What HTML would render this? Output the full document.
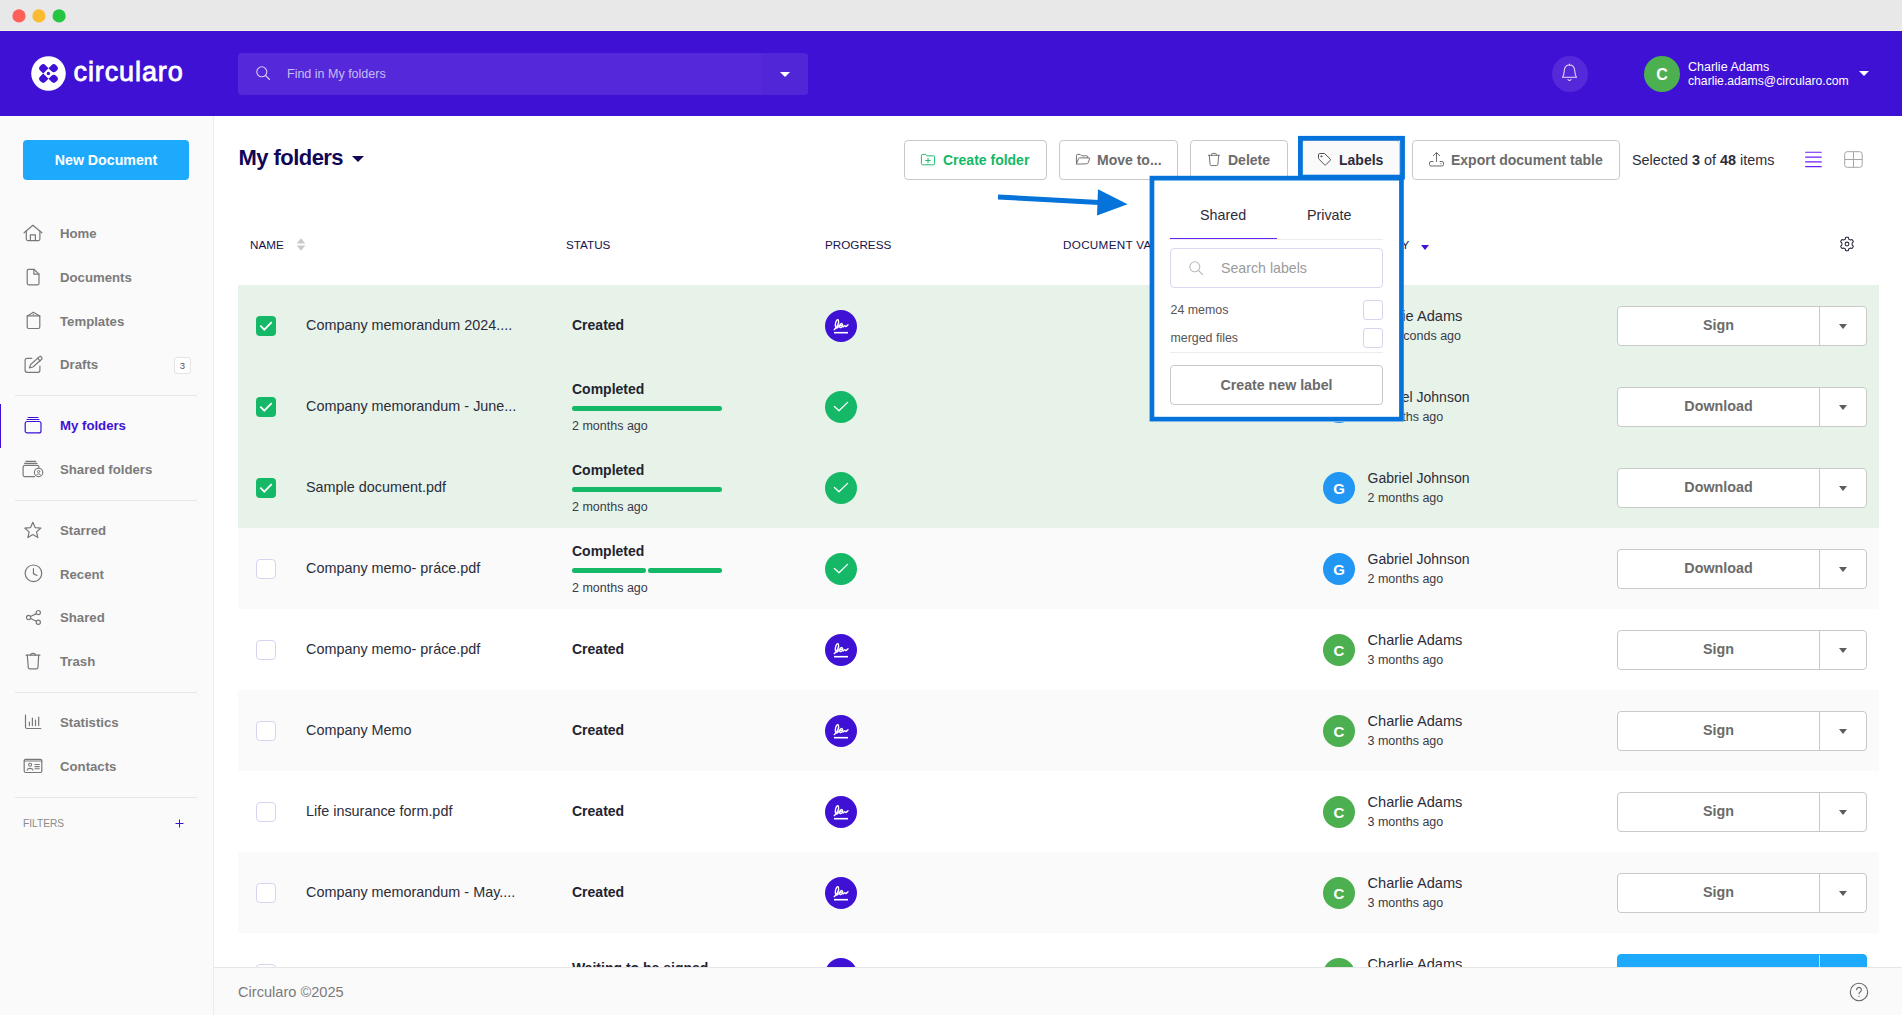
<!DOCTYPE html>
<html>
<head>
<meta charset="utf-8">
<title>Circularo</title>
<style>
*{box-sizing:border-box;margin:0;padding:0}
html,body{width:1902px;height:1015px;overflow:hidden;background:#fff}
body{font-family:"Liberation Sans",sans-serif;color:#2a2a3c;position:relative;font-size:14px}
.abs{position:absolute}
svg{display:block}
/* title bar */
#titlebar{position:absolute;left:0;top:0;width:1902px;height:31px;background:#e8e8e8;border-bottom:1px solid #f3f1ea}
.tl{position:absolute;top:9.400px;width:13px;height:13px;border-radius:50%}
/* header */
#header{position:absolute;left:0;top:31px;width:1902px;height:85px;background:#3f11d5}
#logo-c{position:absolute;left:31.300px;top:25.300px;width:35px;height:35px}
#logo-t{position:absolute;left:73.500px;top:23px;font-size:27px;line-height:36px;color:#fff;-webkit-text-stroke:0.800px #fff;letter-spacing:0.900px}
#search{position:absolute;left:238px;top:22px;width:570px;height:42px;border-radius:4px;background:#5529d9}
#search .dd{position:absolute;right:0;top:0;width:46px;height:42px;background:#5126d6;border-radius:0 4px 4px 0}
#search .ph{position:absolute;left:49px;top:0;line-height:42px;font-size:12.5px;color:#c9bdf4}
#bell{position:absolute;left:1552px;top:25px;width:36px;height:36px;border-radius:50%;background:#5529d9}
#avatar{position:absolute;left:1644px;top:25px;width:36px;height:36px;border-radius:50%;background:#4caf50;color:#fff;font-weight:bold;font-size:16px;line-height:37.500px;text-align:center}
#uname{position:absolute;left:1688px;top:29px;font-size:12.5px;line-height:14px;color:#fff}
/* sidebar */
#sidebar{position:absolute;left:0;top:116px;width:214px;height:899px;background:#fafafa;border-right:1px solid #ececec}
#newdoc{position:absolute;left:23px;top:24px;width:166px;height:40px;border-radius:4px;background:#1eaafc;color:#fff;font-weight:bold;font-size:14.200px;line-height:40px;text-align:center}
.nav{position:absolute;left:60px;font-size:13.200px;font-weight:bold;color:#7b7b7b;line-height:16px}
.nav.act{color:#3f11d5}
.ico{position:absolute;left:22px;width:22px;height:22px}
.sep{position:absolute;left:15px;width:182px;height:1px;background:#e6e6e6}
.badge{position:absolute;left:174px;top:241px;width:17px;height:17px;border:1px solid #e4e4e4;border-radius:3px;background:#fff;font-size:9.5px;line-height:15px;text-align:center;color:#555}
.actbar{position:absolute;left:0;top:288px;width:1px;height:44px;background:#3f11d5}
.filters{position:absolute;left:23px;top:702px;font-size:10.200px;line-height:12px;color:#8a8a8a}
/* main */
#main{position:absolute;left:214px;top:116px;width:1688px;height:899px;background:#fff;overflow:hidden}
/* all children of #main positioned in page coords via offset wrapper */
#m{position:absolute;left:-214px;top:-116px;width:1902px;height:1015px}
#title{position:absolute;left:238.500px;top:143.600px;font-size:22px;font-weight:bold;line-height:28px;color:#120656;letter-spacing:-0.550px}
.tbtn{position:absolute;top:140px;height:40px;border:1px solid #c9c9c9;border-radius:4px;background:#fff;font-size:14px;font-weight:bold;color:#6b6b6b;line-height:38px;white-space:nowrap}
.tbtn span{position:absolute;top:0}
.th{position:absolute;top:237.600px;font-size:11.700px;line-height:14px;color:#17124a;white-space:nowrap}
.row{position:absolute;left:238px;width:1641px;height:81px}
.row.sel{background:#e7f3e9}
.row.odd{background:#fafafa}
.cb{position:absolute;left:18px;top:31px;width:20px;height:20px;border-radius:4px;border:1px solid #d9d3f0;background:#fff}
.cb.on{border:none;background:#14b866}
.nm{position:absolute;left:68px;top:31px;font-size:14.400px;line-height:18px;color:#2c2c3a;white-space:nowrap}
.st{position:absolute;left:334px;font-size:14px;font-weight:bold;line-height:18px;color:#23232f;white-space:nowrap}
.st.one{top:31px}
.st.two{top:14px}
.bar{position:absolute;left:334px;top:40.300px;width:150px;height:4.600px;border-radius:2.300px;background:#14b866}
.ago{position:absolute;left:334px;top:53px;font-size:12.500px;line-height:14px;color:#3a3a48;white-space:nowrap}
.pi{position:absolute;left:587px;top:25px;width:32px;height:32px;border-radius:50%}
.pi.sig{background:#3f11d5}
.pi.ok{background:#14b866}
.av{position:absolute;left:1085px;top:25px;width:32px;height:32px;border-radius:50%;color:#fff;font-weight:bold;font-size:15px;line-height:33px;text-align:center}
.av.g{background:#2196f3}
.av.c{background:#4caf50}
.un{position:absolute;left:1129.500px;top:22px;font-size:14.400px;line-height:18px;color:#2c2c3a;white-space:nowrap}
.ud{position:absolute;left:1129.500px;top:44px;font-size:12.500px;line-height:14px;color:#3a3a48;white-space:nowrap}
.ab{position:absolute;left:1379px;top:21px;width:250px;height:40px;border:1px solid #c9c9c9;border-radius:4px;background:#fff}
.ab .t{position:absolute;left:0;top:0;width:202px;height:38px;line-height:37px;text-align:center;font-size:14.300px;font-weight:bold;color:#6b6b6b;border-right:1px solid #c9c9c9}
.ab .c{position:absolute;left:220.500px;top:16.500px;width:0;height:0;border-left:4.500px solid transparent;border-right:4.500px solid transparent;border-top:5px solid #5c5c5c}
#footer{position:absolute;left:214px;top:967px;width:1688px;height:48px;background:#fafafa;border-top:1px solid #e6e6e6}
#footer .t{position:absolute;left:24px;top:15px;font-size:14.600px;line-height:18px;color:#7a7a7a}
/* popup */
#popup{position:absolute;left:1150px;top:176px;width:254px;height:246px;background:#fff}
#popup .in{position:absolute;left:0;top:0;width:254px;height:246px}
.tab{position:absolute;top:30px;font-size:14.300px;line-height:18px;color:#2c2c3a}
#psearch{position:absolute;left:20px;top:72px;width:213px;height:40px;border:1px solid #dcd7ef;border-radius:4px}
#psearch .ph{position:absolute;left:50px;top:0;line-height:38px;font-size:14.200px;color:#9b9b9b}
.lbl{position:absolute;left:20.500px;font-size:12.400px;line-height:14px;color:#555}
.pcb{position:absolute;left:213px;width:20px;height:20px;border:1px solid #d9d3f0;border-radius:3px;background:#fff}
#pnew{position:absolute;left:20px;top:189px;width:213px;height:40px;border:1px solid #c9c9c9;border-radius:4px;font-size:14.200px;font-weight:bold;color:#6b6b6b;line-height:38px;text-align:center}
</style>
</head>
<body>
<div id="titlebar">
  <svg width="80" height="31" viewBox="0 0 80 31"><circle cx="19" cy="15.900" r="6.600" fill="#fe5f57"/><circle cx="38.900" cy="15.900" r="6.600" fill="#fcb932"/><circle cx="59.100" cy="15.900" r="6.600" fill="#26c441"/></svg>
</div>
<div id="header">
  <svg id="logo-c" viewBox="0 0 35 35"><circle cx="17.500" cy="17.500" r="17.300" fill="#fff"/><path d="M9.94 9.16 Q12.20 6.90 14.46 9.16 L17.50 12.20 L12.20 17.50 L9.16 14.46 Q6.90 12.20 9.16 9.94 Z M20.54 9.16 Q22.80 6.90 25.06 9.16 L25.84 9.94 Q28.10 12.20 25.84 14.46 L25.06 15.24 Q22.80 17.50 20.54 15.24 L17.50 12.20 Z M12.20 17.50 L17.50 22.80 L14.46 25.84 Q12.20 28.10 9.94 25.84 L9.16 25.06 Q6.90 22.80 9.16 20.54 Z M20.54 19.76 Q22.80 17.50 25.06 19.76 L25.84 20.54 Q28.10 22.80 25.84 25.06 L25.06 25.84 Q22.80 28.10 20.54 25.84 L17.50 22.80 Z" fill="#3f11d5"/><circle cx="17.400" cy="17.500" r="1.700" fill="#3f11d5"/></svg>
  <div id="logo-t">circularo</div>
  <div id="search"><div class="dd"></div>
    <svg class="abs" style="left:17px;top:12px" width="16" height="16" viewBox="0 0 16 16" fill="none" stroke="#d9cffa" stroke-width="1.100" stroke-linecap="round"><circle cx="6.800" cy="6.800" r="5"/><path d="M10.500 10.500 L14.500 14.500"/></svg>
    <div class="abs" style="left:542px;top:19px;width:0;height:0;border-left:5px solid transparent;border-right:5px solid transparent;border-top:5px solid #fff"></div><div class="ph">Find in My folders</div></div>
  <div id="bell"><svg class="abs" style="left:8.700px;top:7.300px" width="17" height="19" viewBox="0 0 18 20" fill="none" stroke="#e4dbfc" stroke-width="1.100" stroke-linecap="round" stroke-linejoin="round"><path d="M9 1 V2"/><path d="M1.500 15 C3.500 12.500 3.200 10 3.500 7.500 C3.900 4 6 2 9 2 C12 2 14.100 4 14.500 7.500 C14.800 10 14.500 12.500 16.500 15 Z"/><path d="M7.300 17.300 a1.800 1.800 0 0 0 3.400 0"/></svg></div>
  <div id="avatar">C</div>
  <div class="abs" style="left:1859px;top:40px;width:0;height:0;border-left:5px solid transparent;border-right:5px solid transparent;border-top:5px solid #fff"></div>
  <div id="uname">Charlie Adams<br><span style="font-size:12.200px">charlie.adams@circularo.com</span></div>
</div>
<div id="sidebar">
  <div id="newdoc">New Document</div>
  <!-- nav: tops are relative to sidebar (page y - 116) -->
  <svg class="ico" style="top:106px" viewBox="0 0 22 22" fill="none" stroke="#787878" stroke-width="1.200" stroke-linejoin="round" stroke-linecap="round"><path d="M2.100 10.800 L10.850 3.200 L19.900 10.800"/><path d="M4.300 9 V17.100 a1.500 1.500 0 0 0 1.500 1.500 H16.400 a1.500 1.500 0 0 0 1.500 -1.500 V9"/><path d="M8.400 18.600 V12.800 H13.400 V18.600"/></svg>
  <div class="nav" style="top:110px">Home</div>
  <svg class="ico" style="top:150px" viewBox="0 0 22 22" fill="none" stroke="#787878" stroke-width="1.200" stroke-linejoin="round" stroke-linecap="round"><path d="M5.200 4.800 a1.500 1.500 0 0 1 1.500 -1.500 H11.900 L17 8.100 V17.300 a1.500 1.500 0 0 1 -1.500 1.500 H6.700 a1.500 1.500 0 0 1 -1.500 -1.500 Z"/><path d="M11.900 3.300 V8.100 H17"/></svg>
  <div class="nav" style="top:154px">Documents</div>
  <svg class="ico" style="top:194px" viewBox="0 0 22 22" fill="none" stroke="#787878" stroke-width="1.200" stroke-linejoin="round" stroke-linecap="round"><path d="M5.200 5.900 H17.800 V17 a1.500 1.500 0 0 1 -1.500 1.500 H6.700 a1.500 1.500 0 0 1 -1.500 -1.500 Z"/><path d="M5.300 5.900 L11.400 2.200 L17.700 5.900"/><path d="M11.400 4.300 V4.500"/></svg>
  <div class="nav" style="top:198px">Templates</div>
  <svg class="ico" style="top:237px" viewBox="0 0 22 22" fill="none" stroke="#787878" stroke-width="1.200" stroke-linejoin="round" stroke-linecap="round"><path d="M9.800 5.300 H5.100 a2 2 0 0 0 -2 2 V17.300 a2 2 0 0 0 2 2 H15.900 a2 2 0 0 0 2 -2 V13.200"/><path d="M7.40 14.90 L10.92 14.04 L19.73 6.20 Q20.55 5.47 19.42 4.20 Q18.29 2.93 17.47 3.66 L8.66 11.50 Z"/><path d="M17.94 7.80 L15.68 5.26"/></svg>
  <div class="nav" style="top:241px">Drafts</div>
  <div class="badge">3</div>
  <div class="sep" style="top:279px"></div>
  <div class="actbar"></div>
  <svg class="ico" style="top:298px" viewBox="0 0 22 22" fill="none" stroke="#3f11d5" stroke-width="1.200" stroke-linejoin="round" stroke-linecap="round"><path d="M6.200 3.500 H16"/><path d="M5 5.500 H17"/><rect x="3.200" y="7.500" width="15.800" height="11.400" rx="2"/></svg>
  <div class="nav act" style="top:302px">My folders</div>
  <svg class="ico" style="top:342px;width:24px" viewBox="0 0 24 22" fill="none" stroke="#787878" stroke-width="1.200" stroke-linejoin="round" stroke-linecap="round"><path d="M3.900 3.300 H13.800"/><path d="M2.600 5.300 H15"/><path d="M12.500 18.700 H2.900 a1.800 1.800 0 0 1 -1.800 -1.800 V9.100 a1.800 1.800 0 0 1 1.800 -1.800 H15.100 a1.800 1.800 0 0 1 1.800 1.800 V9.600"/><circle cx="16.600" cy="14.400" r="4.200" stroke-width="1.100"/><circle cx="16.600" cy="13.500" r="1.100" stroke-width="1"/><path d="M14.400 17.300 a2.400 2.400 0 0 1 4.400 0" stroke-width="1"/></svg>
  <div class="nav" style="top:346px">Shared folders</div>
  <div class="sep" style="top:384px"></div>
  <svg class="ico" style="top:403px" viewBox="0 0 22 22" fill="none" stroke="#787878" stroke-width="1.200" stroke-linejoin="round" stroke-linecap="round"><path d="M10.85 3.20 L13.14 8.54 L18.93 9.07 L14.56 12.91 L15.85 18.58 L10.85 15.60 L5.85 18.58 L7.14 12.91 L2.77 9.07 L8.56 8.54 Z"/></svg>
  <div class="nav" style="top:407px">Starred</div>
  <svg class="ico" style="top:447px" viewBox="0 0 22 22" fill="none" stroke="#787878" stroke-width="1.200" stroke-linejoin="round" stroke-linecap="round"><circle cx="11.450" cy="10.300" r="8.300"/><path d="M11.450 5.700 V10.600 L15 12.500"/></svg>
  <div class="nav" style="top:451px">Recent</div>
  <svg class="ico" style="top:490px" viewBox="0 0 22 22" fill="none" stroke="#787878" stroke-width="1.200" stroke-linejoin="round" stroke-linecap="round"><circle cx="6.600" cy="11.500" r="2.100"/><circle cx="16.300" cy="6.600" r="2.100"/><circle cx="16.300" cy="16.200" r="2.100"/><path d="M8.500 10.500 L14.400 7.600"/><path d="M8.500 12.500 L14.400 15.300"/></svg>
  <div class="nav" style="top:494px">Shared</div>
  <svg class="ico" style="top:534px" viewBox="0 0 22 22" fill="none" stroke="#787878" stroke-width="1.200" stroke-linejoin="round" stroke-linecap="round"><path d="M4.100 5.200 H17.900"/><path d="M8.500 5.200 C8.500 3.700 9.300 3.300 11 3.300 C12.700 3.300 13.500 3.700 13.500 5.200"/><path d="M5.300 5.200 L6.300 17.600 a1.300 1.300 0 0 0 1.300 1.200 H14.600 a1.300 1.300 0 0 0 1.300 -1.200 L16.700 5.200"/></svg>
  <div class="nav" style="top:538px">Trash</div>
  <div class="sep" style="top:576px"></div>
  <svg class="ico" style="top:595px" viewBox="0 0 22 22" fill="none" stroke="#787878" stroke-width="1.200" stroke-linejoin="round" stroke-linecap="round"><path d="M3.500 4.100 V16 a1.500 1.500 0 0 0 1.500 1.500 H18.800"/><path d="M7.400 11.200 V14.600"/><path d="M10.400 7 V14.600"/><path d="M13.500 9.100 V14.600"/><path d="M16.700 6.200 V14.600"/></svg>
  <div class="nav" style="top:599px">Statistics</div>
  <svg class="ico" style="top:639px" viewBox="0 0 22 22" fill="none" stroke="#787878" stroke-width="1.200" stroke-linejoin="round" stroke-linecap="round"><rect x="2.200" y="4.300" width="17.600" height="13.200" rx="1.500"/><path d="M2.200 6 H19.800"/><circle cx="8.100" cy="9.700" r="1.500" stroke-width="1.100"/><path d="M5.200 15.200 C5.800 12.700 10.300 12.700 10.900 15.200" stroke-width="1.100"/><path d="M12.900 9.500 H17.300 M12.900 11.600 H17.300 M12.900 13.700 H17.300" stroke-width="1.100"/></svg>
  <div class="nav" style="top:643px">Contacts</div>
  <div class="sep" style="top:681px"></div>
  <div class="filters">FILTERS</div>
  <svg class="abs" style="left:175px;top:703px;width:9px;height:9px" viewBox="0 0 9 9" stroke="#3f11d5" stroke-width="1"><path d="M4.500 0.500 V8.500 M0.500 4.500 H8.500"/></svg>
</div>
<div id="main"><div id="m">
<div id="title">My folders</div>
<div class="abs" style="left:352px;top:156px;width:0;height:0;border-left:6px solid transparent;border-right:6px solid transparent;border-top:6px solid #120656"></div>
<!-- toolbar -->
<div class="tbtn" style="left:904px;width:143px;color:#14b866"><svg class="abs" style="left:15.200px;top:11.700px" width="16" height="13.200" viewBox="0 0 17 14" fill="none" stroke="#14b866" stroke-width="1" stroke-linejoin="round" stroke-linecap="round"><path d="M1.500 2.500 a1 1 0 0 1 1 -1 H6 L7.500 3 H14.500 a1 1 0 0 1 1 1 V11.500 a1 1 0 0 1 -1 1 H2.500 a1 1 0 0 1 -1 -1 Z"/><path d="M8.500 5.500 V10.500 M6 8 H11"/></svg><span style="left:38px">Create folder</span></div>
<div class="tbtn" style="left:1059px;width:119px"><svg class="abs" style="left:15.200px;top:12px" width="16" height="12.200" viewBox="0 0 17 13" fill="none" stroke="#6b6b6b" stroke-width="1" stroke-linejoin="round" stroke-linecap="round"><path d="M1.500 10.500 V2.500 a1 1 0 0 1 1 -1 H5.500 L7 3 H12.500 a1 1 0 0 1 1 1 V5"/><path d="M1.500 11.500 L3.800 5.800 a1 1 0 0 1 0.900 -0.600 H15 a0.700 0.700 0 0 1 0.600 1 L13.800 10.800 a1 1 0 0 1 -0.900 0.700 Z"/></svg><span style="left:37px">Move to...</span></div>
<div class="tbtn" style="left:1190px;width:98px"><svg class="abs" style="left:16.200px;top:10.500px" width="14" height="15" viewBox="0 0 15 16" fill="none" stroke="#6b6b6b" stroke-width="1" stroke-linejoin="round" stroke-linecap="round"><path d="M1.500 3.500 H13.500"/><path d="M5 3.500 V2.300 a0.800 0.800 0 0 1 0.800 -0.800 H9.200 a0.800 0.800 0 0 1 0.800 0.800 V3.500"/><path d="M2.500 3.500 L3.300 13.300 a1.300 1.300 0 0 0 1.300 1.200 H10.400 a1.300 1.300 0 0 0 1.300 -1.200 L12.500 3.500"/></svg><span style="left:37px">Delete</span></div>
<div class="tbtn" style="left:1301px;width:99px;background:#fafafa;color:#2b2b3d"><svg class="abs" style="left:13.500px;top:9.600px" width="16" height="16" viewBox="0 0 16 16" fill="none" stroke="#505050" stroke-width="1" stroke-linejoin="round" stroke-linecap="round"><path d="M2.500 3.500 a1 1 0 0 1 1 -1 H8.200 a1 1 0 0 1 0.700 0.300 L14.200 8 a1 1 0 0 1 0 1.400 L9.900 13.700 a1 1 0 0 1 -1.400 0 L2.800 8 a1 1 0 0 1 -0.300 -0.700 Z"/><circle cx="5.300" cy="5.300" r="0.550"/></svg><span style="left:37px">Labels</span></div>
<div class="tbtn" style="left:1412px;width:208px"><svg class="abs" style="left:15px;top:10px" width="17" height="17" viewBox="0 0 17 17" fill="none" stroke="#6b6b6b" stroke-width="1" stroke-linejoin="round" stroke-linecap="round"><path d="M8.500 10.500 V1.800"/><path d="M5.300 4.800 L8.500 1.600 L11.700 4.800"/><path d="M5 10.500 H3 a1.500 1.500 0 0 0 -1.500 1.500 V13.500 a1.500 1.500 0 0 0 1.500 1.500 H14 a1.500 1.500 0 0 0 1.500 -1.500 V12 a1.500 1.500 0 0 0 -1.500 -1.500 H12"/><path d="M12.800 12.800 H13"/></svg><span style="left:38px">Export document table</span></div>
<div class="abs" id="selinfo" style="left:1632px;top:151px;font-size:14.400px;line-height:18px;color:#2c2c3a;white-space:nowrap">Selected <b>3</b> of <b>48</b> items</div>
<svg class="abs" style="left:1804px;top:150px" width="19" height="18" viewBox="0 0 19 18" stroke="#6a1fff" stroke-width="1.100" stroke-linecap="round"><path d="M1.600 2.200 H17.300 M1.600 7.100 H17.300 M1.600 11.900 H17.300 M1.600 16.600 H17.300"/></svg>
<svg class="abs" style="left:1843px;top:150px" width="21" height="19" viewBox="0 0 21 19" fill="none" stroke="#a6a6a6" stroke-width="1"><rect x="1.700" y="1.700" width="17.500" height="15.600" rx="2.500"/><path d="M10.500 1.700 V17.300 M1.700 9.500 H19.200"/></svg>
<svg class="abs" style="left:296px;top:237.500px" width="10" height="13" viewBox="0 0 10 13" fill="#c9c9c9"><path d="M5 0.300 L9.300 5.500 H0.700 Z M5 12.700 L0.700 7.500 H9.300 Z"/></svg>
<div class="abs" style="left:1420.500px;top:245px;width:0;height:0;border-left:4.500px solid transparent;border-right:4.500px solid transparent;border-top:5px solid #3f11d5"></div>
<svg class="abs" style="left:1839px;top:236.100px" width="16" height="16" viewBox="0 0 16 16" fill="none" stroke="#23233a" stroke-width="1.050" stroke-linejoin="round"><path d="M8.00 1.25 L8.44 1.26 L8.88 1.31 L9.29 1.52 L9.54 2.25 L9.70 2.99 L9.97 3.24 L10.28 3.38 L10.57 3.54 L10.86 3.72 L11.14 3.91 L11.49 4.02 L12.21 3.79 L12.97 3.64 L13.36 3.89 L13.61 4.25 L13.85 4.62 L14.05 5.01 L14.24 5.42 L14.26 5.88 L13.75 6.46 L13.19 6.97 L13.11 7.33 L13.14 7.66 L13.15 8.00 L13.14 8.34 L13.11 8.67 L13.19 9.03 L13.75 9.54 L14.26 10.12 L14.24 10.58 L14.05 10.99 L13.85 11.37 L13.61 11.75 L13.36 12.11 L12.97 12.36 L12.21 12.21 L11.49 11.98 L11.14 12.09 L10.86 12.28 L10.57 12.46 L10.28 12.62 L9.97 12.76 L9.70 13.01 L9.54 13.75 L9.29 14.48 L8.88 14.69 L8.44 14.74 L8.00 14.75 L7.56 14.74 L7.12 14.69 L6.71 14.48 L6.46 13.75 L6.30 13.01 L6.03 12.76 L5.72 12.62 L5.43 12.46 L5.14 12.28 L4.86 12.09 L4.51 11.98 L3.79 12.21 L3.03 12.36 L2.64 12.11 L2.39 11.75 L2.15 11.38 L1.95 10.99 L1.76 10.58 L1.74 10.12 L2.25 9.54 L2.81 9.03 L2.89 8.67 L2.86 8.34 L2.85 8.00 L2.86 7.66 L2.89 7.33 L2.81 6.97 L2.25 6.46 L1.74 5.88 L1.76 5.42 L1.95 5.01 L2.15 4.62 L2.39 4.25 L2.64 3.89 L3.03 3.64 L3.79 3.79 L4.51 4.02 L4.86 3.91 L5.14 3.72 L5.42 3.54 L5.72 3.38 L6.03 3.24 L6.30 2.99 L6.46 2.25 L6.71 1.52 L7.12 1.31 L7.56 1.26 Z"/><circle cx="8" cy="8" r="1.900"/></svg>
<!-- table header -->
<div class="th" style="left:250px">NAME</div>
<div class="th" style="left:566px">STATUS</div>
<div class="th" style="left:825px">PROGRESS</div>
<div class="th" style="left:1063px;letter-spacing:0.300px">DOCUMENT VALIDITY</div>
<div class="th" style="left:1333.400px">MODIFIED BY</div>
<div class="row sel" style="top:285px"><div class="cb on"><svg viewBox="0 0 20 20" width="20" height="20" fill="none" stroke="#fff" stroke-width="1.800" stroke-linecap="butt" stroke-linejoin="miter"><path d="M4.300 9.600 L8.300 13.600 L15.700 6.100"/></svg></div><div class="nm">Company memorandum 2024....</div><div class="st one">Created</div><div class="pi sig"><svg viewBox="0 0 32 32" width="32" height="32" fill="none" stroke="#fff" stroke-width="1.400" stroke-linecap="round" stroke-linejoin="round"><path d="M9.300 19.600 C11.500 18.200 14.600 13 13.400 10.200 C12.400 8.400 10.400 11.500 10.300 15 C10.200 18.300 12 18.800 13.600 16.600 C14.400 15.400 15.600 13.200 17 13.600 C18.400 14.200 17.200 18 15.400 17.600 C14 17.200 14.800 15 16.400 15.400 C17.400 15.700 17.600 17.300 18.600 16.600 C19.400 16 19.800 15 20.400 16.200 C20.900 17.200 22 15.600 23 14.800"/><path d="M9 22.700 H23" stroke-width="1.600" stroke-linecap="butt"/></svg></div><div class="av c">C</div><div class="un" style="font-size:14.600px">Charlie Adams</div><div class="ud" style="left:auto;right:418px">a few seconds ago</div><div class="ab"><div class="t">Sign</div><div class="c"></div></div></div>
<div class="row sel" style="top:366px"><div class="cb on"><svg viewBox="0 0 20 20" width="20" height="20" fill="none" stroke="#fff" stroke-width="1.800" stroke-linecap="butt" stroke-linejoin="miter"><path d="M4.300 9.600 L8.300 13.600 L15.700 6.100"/></svg></div><div class="nm">Company memorandum - June...</div><div class="st two">Completed</div><div class="bar"></div><div class="ago">2 months ago</div><div class="pi ok"><svg viewBox="0 0 32 32" width="32" height="32" fill="none" stroke="#fff" stroke-width="1.300" stroke-linecap="round" stroke-linejoin="round"><path d="M9.400 15.500 L14 19.800 L22.600 11.400"/></svg></div><div class="av g">G</div><div class="un" style="font-size:14px">Gabriel Johnson</div><div class="ud">2 months ago</div><div class="ab"><div class="t">Download</div><div class="c"></div></div></div>
<div class="row sel" style="top:447px"><div class="cb on"><svg viewBox="0 0 20 20" width="20" height="20" fill="none" stroke="#fff" stroke-width="1.800" stroke-linecap="butt" stroke-linejoin="miter"><path d="M4.300 9.600 L8.300 13.600 L15.700 6.100"/></svg></div><div class="nm">Sample document.pdf</div><div class="st two">Completed</div><div class="bar"></div><div class="ago">2 months ago</div><div class="pi ok"><svg viewBox="0 0 32 32" width="32" height="32" fill="none" stroke="#fff" stroke-width="1.300" stroke-linecap="round" stroke-linejoin="round"><path d="M9.400 15.500 L14 19.800 L22.600 11.400"/></svg></div><div class="av g">G</div><div class="un" style="font-size:14px">Gabriel Johnson</div><div class="ud">2 months ago</div><div class="ab"><div class="t">Download</div><div class="c"></div></div></div>
<div class="row odd" style="top:528px"><div class="cb"></div><div class="nm">Company memo- práce.pdf</div><div class="st two">Completed</div><div class="bar" style="width:74px"></div><div class="bar" style="left:410px;width:74px"></div><div class="ago">2 months ago</div><div class="pi ok"><svg viewBox="0 0 32 32" width="32" height="32" fill="none" stroke="#fff" stroke-width="1.300" stroke-linecap="round" stroke-linejoin="round"><path d="M9.400 15.500 L14 19.800 L22.600 11.400"/></svg></div><div class="av g">G</div><div class="un" style="font-size:14px">Gabriel Johnson</div><div class="ud">2 months ago</div><div class="ab"><div class="t">Download</div><div class="c"></div></div></div>
<div class="row " style="top:609px"><div class="cb"></div><div class="nm">Company memo- práce.pdf</div><div class="st one">Created</div><div class="pi sig"><svg viewBox="0 0 32 32" width="32" height="32" fill="none" stroke="#fff" stroke-width="1.400" stroke-linecap="round" stroke-linejoin="round"><path d="M9.300 19.600 C11.500 18.200 14.600 13 13.400 10.200 C12.400 8.400 10.400 11.500 10.300 15 C10.200 18.300 12 18.800 13.600 16.600 C14.400 15.400 15.600 13.200 17 13.600 C18.400 14.200 17.200 18 15.400 17.600 C14 17.200 14.800 15 16.400 15.400 C17.400 15.700 17.600 17.300 18.600 16.600 C19.400 16 19.800 15 20.400 16.200 C20.900 17.200 22 15.600 23 14.800"/><path d="M9 22.700 H23" stroke-width="1.600" stroke-linecap="butt"/></svg></div><div class="av c">C</div><div class="un" style="font-size:14.600px">Charlie Adams</div><div class="ud">3 months ago</div><div class="ab"><div class="t">Sign</div><div class="c"></div></div></div>
<div class="row odd" style="top:690px"><div class="cb"></div><div class="nm">Company Memo</div><div class="st one">Created</div><div class="pi sig"><svg viewBox="0 0 32 32" width="32" height="32" fill="none" stroke="#fff" stroke-width="1.400" stroke-linecap="round" stroke-linejoin="round"><path d="M9.300 19.600 C11.500 18.200 14.600 13 13.400 10.200 C12.400 8.400 10.400 11.500 10.300 15 C10.200 18.300 12 18.800 13.600 16.600 C14.400 15.400 15.600 13.200 17 13.600 C18.400 14.200 17.200 18 15.400 17.600 C14 17.200 14.800 15 16.400 15.400 C17.400 15.700 17.600 17.300 18.600 16.600 C19.400 16 19.800 15 20.400 16.200 C20.900 17.200 22 15.600 23 14.800"/><path d="M9 22.700 H23" stroke-width="1.600" stroke-linecap="butt"/></svg></div><div class="av c">C</div><div class="un" style="font-size:14.600px">Charlie Adams</div><div class="ud">3 months ago</div><div class="ab"><div class="t">Sign</div><div class="c"></div></div></div>
<div class="row " style="top:771px"><div class="cb"></div><div class="nm">Life insurance form.pdf</div><div class="st one">Created</div><div class="pi sig"><svg viewBox="0 0 32 32" width="32" height="32" fill="none" stroke="#fff" stroke-width="1.400" stroke-linecap="round" stroke-linejoin="round"><path d="M9.300 19.600 C11.500 18.200 14.600 13 13.400 10.200 C12.400 8.400 10.400 11.500 10.300 15 C10.200 18.300 12 18.800 13.600 16.600 C14.400 15.400 15.600 13.200 17 13.600 C18.400 14.200 17.200 18 15.400 17.600 C14 17.200 14.800 15 16.400 15.400 C17.400 15.700 17.600 17.300 18.600 16.600 C19.400 16 19.800 15 20.400 16.200 C20.900 17.200 22 15.600 23 14.800"/><path d="M9 22.700 H23" stroke-width="1.600" stroke-linecap="butt"/></svg></div><div class="av c">C</div><div class="un" style="font-size:14.600px">Charlie Adams</div><div class="ud">3 months ago</div><div class="ab"><div class="t">Sign</div><div class="c"></div></div></div>
<div class="row odd" style="top:852px"><div class="cb"></div><div class="nm">Company memorandum - May....</div><div class="st one">Created</div><div class="pi sig"><svg viewBox="0 0 32 32" width="32" height="32" fill="none" stroke="#fff" stroke-width="1.400" stroke-linecap="round" stroke-linejoin="round"><path d="M9.300 19.600 C11.500 18.200 14.600 13 13.400 10.200 C12.400 8.400 10.400 11.500 10.300 15 C10.200 18.300 12 18.800 13.600 16.600 C14.400 15.400 15.600 13.200 17 13.600 C18.400 14.200 17.200 18 15.400 17.600 C14 17.200 14.800 15 16.400 15.400 C17.400 15.700 17.600 17.300 18.600 16.600 C19.400 16 19.800 15 20.400 16.200 C20.900 17.200 22 15.600 23 14.800"/><path d="M9 22.700 H23" stroke-width="1.600" stroke-linecap="butt"/></svg></div><div class="av c">C</div><div class="un" style="font-size:14.600px">Charlie Adams</div><div class="ud">3 months ago</div><div class="ab"><div class="t">Sign</div><div class="c"></div></div></div>
<div class="row " style="top:933px"><div class="cb"></div><div class="nm"></div><div class="st one" style="top:25.500px">Waiting to be signed</div><div class="pi sig"><svg viewBox="0 0 32 32" width="32" height="32" fill="none" stroke="#fff" stroke-width="1.400" stroke-linecap="round" stroke-linejoin="round"><path d="M9.300 19.600 C11.500 18.200 14.600 13 13.400 10.200 C12.400 8.400 10.400 11.500 10.300 15 C10.200 18.300 12 18.800 13.600 16.600 C14.400 15.400 15.600 13.200 17 13.600 C18.400 14.200 17.200 18 15.400 17.600 C14 17.200 14.800 15 16.400 15.400 C17.400 15.700 17.600 17.300 18.600 16.600 C19.400 16 19.800 15 20.400 16.200 C20.900 17.200 22 15.600 23 14.800"/><path d="M9 22.700 H23" stroke-width="1.600" stroke-linecap="butt"/></svg></div><div class="av c">C</div><div class="un" style="font-size:14.600px">Charlie Adams</div><div class="ud">3 months ago</div><div class="ab" style="background:#1eaafc;border-color:#1eaafc"><div class="t" style="border-right-color:rgba(255,255,255,.65)"></div><div class="c"></div></div></div>

</div></div>
<div id="footer"><div class="t">Circularo ©2025</div><svg class="abs" style="left:1635px;top:14px" width="20" height="20" viewBox="0 0 20 20" fill="none" stroke="#666" stroke-width="1.100" stroke-linecap="round"><circle cx="10" cy="10" r="8.700"/><path d="M7.600 7.800 a2.400 2.400 0 1 1 3.600 2.100 c-0.800 0.500 -1.200 0.900 -1.200 1.900"/><path d="M10 14.300 V14.500"/></svg></div>
<!-- highlight + popup (coordinates inside #popup .in are page x-1150, y-176) -->
<div id="popup"><div class="in">
  <div class="tab" style="left:50px">Shared</div>
  <div class="tab" style="left:157px">Private</div>
  <div class="abs" style="left:20px;top:63px;width:213px;height:1px;background:#ececec"></div>
  <div class="abs" style="left:20px;top:62px;width:107px;height:1px;background:#6a1fff"></div>
  <div id="psearch">
    <svg class="abs" style="left:17px;top:11px" width="16" height="16" viewBox="0 0 16 16" fill="none" stroke="#bdbdbd" stroke-width="1.100" stroke-linecap="round"><circle cx="6.800" cy="6.800" r="5"/><path d="M10.500 10.500 L14.500 14.500"/></svg>
    <div class="ph">Search labels</div>
  </div>
  <div class="lbl" style="top:126.500px">24 memos</div>
  <div class="pcb" style="top:124px"></div>
  <div class="lbl" style="top:154.500px">merged files</div>
  <div class="pcb" style="top:152px"></div>
  <div class="abs" style="left:20px;top:176px;width:213px;height:1px;background:#ececec"></div>
  <div id="pnew">Create new label</div>
</div></div>
<svg class="abs" style="left:0;top:0" width="1902" height="1015" viewBox="0 0 1902 1015" fill="none">
<rect x="1151.950" y="178.150" width="249.500" height="241" stroke="#0573d9" stroke-width="4.700"/>
<rect x="1300.430" y="138.300" width="102.070" height="38.800" stroke="#0573d9" stroke-width="4.800"/>
<path d="M998 197 L1099 202.500" stroke="#0573d9" stroke-width="5"/><path d="M1098 189.300 L1127.600 204.300 L1097 215.500 Z" fill="#0573d9"/>
</svg>
</body>
</html>
